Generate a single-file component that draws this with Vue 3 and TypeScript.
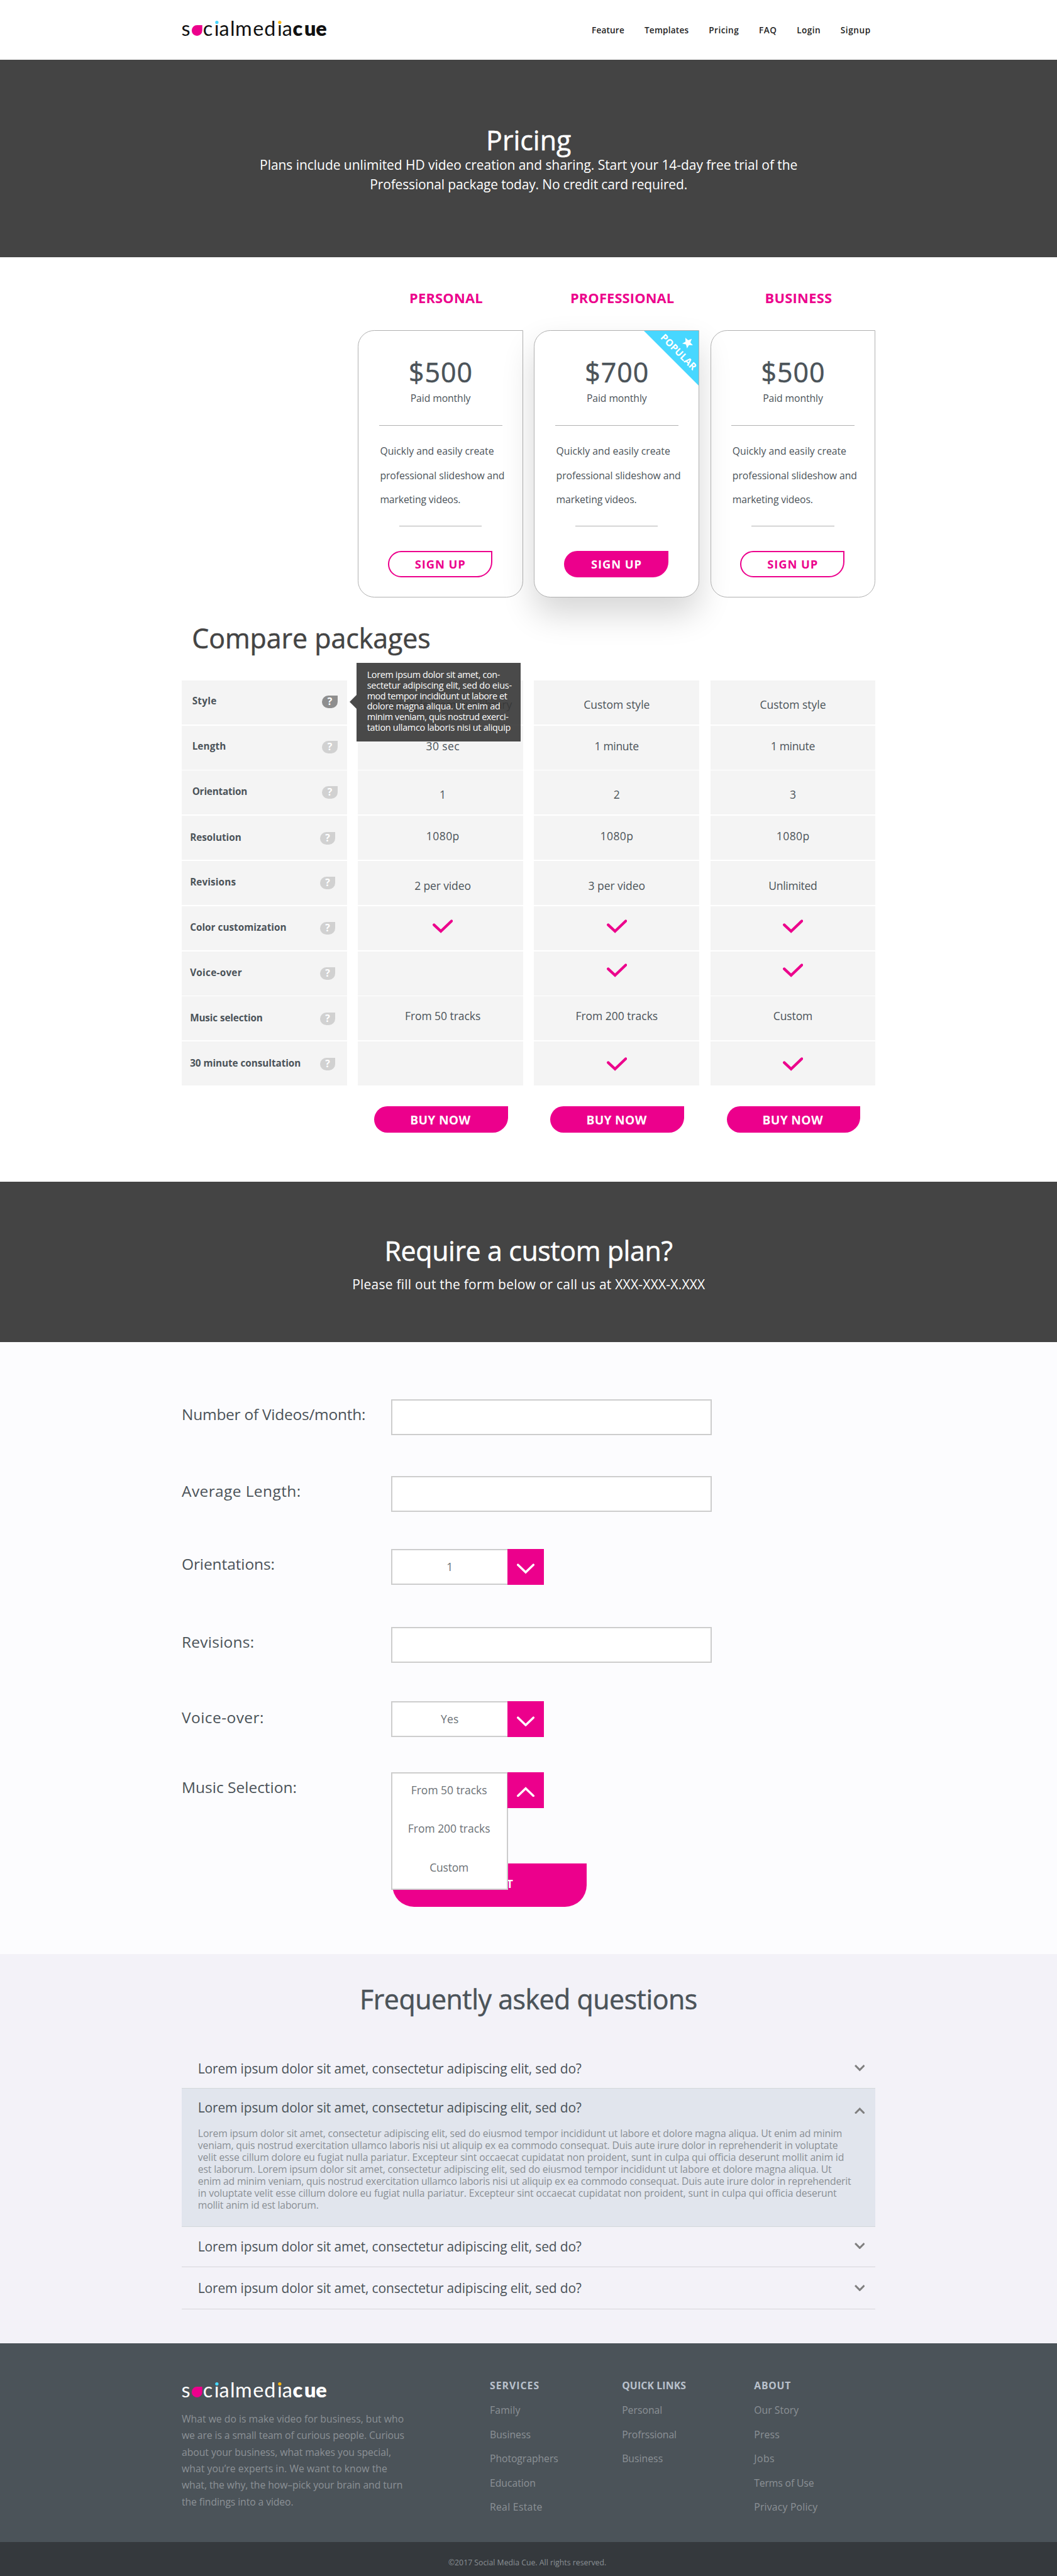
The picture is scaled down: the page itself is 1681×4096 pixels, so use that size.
<script setup lang="ts">
import { ref } from 'vue'
import type { Directive } from 'vue'

type Line = [text: string, width: number]

// Tracks a single line of text so that it spans the given width in layout pixels.
const vFit: Directive<HTMLElement, number> = {
  mounted(el, { value }) {
    const page = el.closest('.page')
    const count = (el.textContent ?? '').trim().length
    if (!page || count < 2) return
    const scale = page.getBoundingClientRect().width / 1920
    const natural = el.getBoundingClientRect().width / scale
    const bearings = parseFloat(getComputedStyle(el).fontSize) * 0.07
    const spacing = (value + bearings - natural) / (count - 1)
    el.style.letterSpacing = `${spacing}px`
    el.style.marginRight = `${-spacing}px`
  },
}

const nav: Line[] = [
  ['Feature', 58], ['Templates', 79], ['Pricing', 53], ['FAQ', 31], ['Login', 41.5], ['Signup', 53],
]

const plans = [
  { name: 'PERSONAL', nameWidth: 131.5, price: '$500', popular: false },
  { name: 'PROFESSIONAL', nameWidth: 187, price: '$700', popular: true },
  { name: 'BUSINESS', nameWidth: 120, price: '$500', popular: false },
]

const planText: Line[] = [
  ['Quickly and easily create', 205.6],
  ['professional slideshow and', 225],
  ['marketing videos.', 145],
]

const tooltip: Line[] = [
  ['Lorem ipsum dolor sit amet, con-', 240.7],
  ['sectetur adipiscing elit, sed do eius-', 262],
  ['mod tempor incididunt ut labore et', 253.7],
  ['dolore magna aliqua. Ut enim ad', 241],
  ['minim veniam, quis nostrud exerci-', 256],
  ['tation ullamco laboris nisi ut aliquip', 260],
]

const check = 'check'
type Cell = Line | 'check' | null
const features: { key: string; label: Line; cells: Cell[] }[] = [
  { key: 'style', label: ['Style', 43], cells: [['Pick a style from our library', 250], ['Custom style', 118.7], ['Custom style', 118.7]] },
  { key: 'length', label: ['Length', 60], cells: [['30 sec', 59.4], ['1 minute', 79], ['1 minute', 79]] },
  { key: 'orientation', label: ['Orientation', 99], cells: [['1', 10], ['2', 11], ['3', 11]] },
  { key: 'resolution', label: ['Resolution', 92], cells: [['1080p', 58.5], ['1080p', 58.5], ['1080p', 58.5]] },
  { key: 'revisions', label: ['Revisions', 82], cells: [['2 per video', 101], ['3 per video', 102], ['Unlimited', 87]] },
  { key: 'color', label: ['Color customization', 174], cells: [check, check, check] },
  { key: 'voice', label: ['Voice-over', 93], cells: [null, check, check] },
  { key: 'music', label: ['Music selection', 131], cells: [['From 50 tracks', 136], ['From 200 tracks', 148], ['Custom', 70]] },
  { key: 'consultation', label: ['30 minute consultation', 200], cells: [null, check, check] },
]

const tracks: Line[] = [['From 50 tracks', 136.7], ['From 200 tracks', 148], ['Custom', 69.4]]

const question = 'Lorem ipsum dolor sit amet, consectetur adipiscing elit, sed do?'
const openItem = ref(1)
const answer: Line[] = [
  ['Lorem ipsum dolor sit amet, consectetur adipiscing elit, sed do eiusmod tempor incididunt ut labore et dolore magna aliqua. Ut enim ad minim', 1168.6],
  ['veniam, quis nostrud exercitation ullamco laboris nisi ut aliquip ex ea commodo consequat. Duis aute irure dolor in reprehenderit in voluptate', 1161],
  ['velit esse cillum dolore eu fugiat nulla pariatur. Excepteur sint occaecat cupidatat non proident, sunt in culpa qui officia deserunt mollit anim id', 1172],
  ['est laborum. Lorem ipsum dolor sit amet, consectetur adipiscing elit, sed do eiusmod tempor incididunt ut labore et dolore magna aliqua. Ut', 1149.6],
  ['enim ad minim veniam, quis nostrud exercitation ullamco laboris nisi ut aliquip ex ea commodo consequat. Duis aute irure dolor in reprehenderit', 1185],
  ['in voluptate velit esse cillum dolore eu fugiat nulla pariatur. Excepteur sint occaecat cupidatat non proident, sunt in culpa qui officia deserunt', 1158.7],
  ['mollit anim id est laborum.', 218],
]

const about: Line[] = [
  ['What we do is make video for business, but who', 402],
  ['we are is a small team of curious people. Curious', 403],
  ['about your business, what makes you special,', 379],
  ['what you’re experts in. We want to know the', 372],
  ['what, the why, the how–pick your brain and turn', 400],
  ['the findings into a video.', 201.5],
]

const columns: { title: Line; links: Line[] }[] = [
  { title: ['SERVICES', 88], links: [['Family', 54], ['Business', 73], ['Photographers', 123], ['Education', 82], ['Real Estate', 94]] },
  { title: ['QUICK LINKS', 115], links: [['Personal', 72], ['Profrssional', 98], ['Business', 73]] },
  { title: ['ABOUT', 65], links: [['Our Story', 79.5], ['Press', 45], ['Jobs', 35.5], ['Terms of Use', 107.5], ['Privacy Policy', 114]] },
]
</script>

<template>
  <div class="page">
    <header class="header">
      <div class="container header-inner">
        <svg class="logo" viewBox="330 24 270 52" width="270" height="52">
          <text class="thin" x="329.5" y="64.7">s</text>
          <path class="drop" d="M367.3 45.7V55.4A9.6 9.7 0 1 1 357.7 45.7Z" />
          <text class="thin" x="368.5 389.2 398 418 427 459.3 480 503.6 512.4" y="64.7">cialmedia</text>
          <text class="heavy" x="531.5 552.6 573.5" y="64.7">cue</text>
          <rect class="mask" x="390" y="35" width="7.6" height="9.4" />
          <rect class="mask" x="504.4" y="35" width="7.2" height="9.4" />
          <circle cx="393.8" cy="40.6" r="3" fill="#47d7ff" />
          <circle cx="508" cy="40.6" r="3" fill="#fdb913" />
        </svg>
        <nav class="nav">
          <a v-for="[text, width] in nav" :key="text" v-fit="width">{{ text }}</a>
        </nav>
      </div>
    </header>

    <section class="hero">
      <h1><span v-fit="151" class="line">Pricing</span></h1>
      <p>
        <span v-fit="975" class="line">Plans include unlimited HD video creation and sharing. Start your 14-day free trial of the</span><br />
        <span v-fit="575" class="line">Professional package today. No credit card required.</span>
      </p>
    </section>

    <section class="pricing">
      <div class="container">
        <div class="plans plan-names">
          <h3 v-for="plan in plans" :key="plan.name"><span v-fit="plan.nameWidth" class="line">{{ plan.name }}</span></h3>
        </div>
        <div class="plans">
          <article v-for="plan in plans" :key="plan.name" class="card" :class="{ popular: plan.popular }">
            <svg v-if="plan.popular" class="ribbon" viewBox="0 0 100 100" width="100" height="100">
              <path d="M0 0H100V100Z" fill="#47d7ff" />
              <g transform="translate(63 38.5) rotate(45)" fill="#fff">
                <text x="-42" y="6" textLength="84" font-size="17.5" font-weight="700">POPULAR</text>
                <path transform="translate(0 -24)" d="M0-10L2.8-3.5 9.7-3 4.4 1.7 6.1 8.5 0 4.8-6.1 8.5-4.4 1.7-9.7-3-2.8-3.5Z" />
              </g>
            </svg>
            <div class="price"><span v-fit="112" class="line">{{ plan.price }}</span></div>
            <div class="period"><span v-fit="108" class="line">Paid monthly</span></div>
            <hr class="rule" />
            <p class="plan-text">
              <template v-for="[text, width] in planText" :key="text"><span v-fit="width" class="line">{{ text }}</span><br /></template>
            </p>
            <hr class="rule short" />
            <button class="signup"><span v-fit="90" class="line">SIGN UP</span></button>
          </article>
        </div>

        <h2 class="compare-title"><span v-fit="430" class="line">Compare packages</span></h2>
        <div class="compare">
          <template v-for="(feature, row) in features" :key="feature.key">
            <div class="cell label" :class="{ indented: row < 3 }">
              <span v-fit="feature.label[1]" class="line">{{ feature.label[0] }}</span>
              <span class="hint" :class="{ active: row === 0 }">?</span>
            </div>
            <div v-for="(cell, col) in feature.cells" :key="col" class="cell value" :class="[feature.key, 'col-' + col]">
              <svg v-if="cell === 'check'" class="check" viewBox="0 0 37 25" width="37" height="25">
                <path d="M2.6 9.8L15 21.5 34.4 2.8" />
              </svg>
              <span v-else-if="cell" v-fit="cell[1]" class="line">{{ cell[0] }}</span>
              <div v-if="row === 0 && col === 0" class="tooltip">
                <template v-for="[text, width] in tooltip" :key="text"><span v-fit="width" class="line">{{ text }}</span><br /></template>
              </div>
            </div>
          </template>
        </div>
        <div class="plans buy-row">
          <button v-for="plan in plans" :key="plan.name" class="buy"><span v-fit="108" class="line">BUY NOW</span></button>
        </div>
      </div>
    </section>

    <section class="custom">
      <h2><span v-fit="520" class="line">Require a custom plan?</span></h2>
      <p><span v-fit="639" class="line">Please fill out the form below or call us at XXX-XXX-X.XXX</span></p>
    </section>

    <section class="request">
      <form class="container form" @submit.prevent>
        <label><span v-fit="332" class="line">Number of Videos/month:</span></label>
        <input type="text" />
        <label><span v-fit="214" class="line">Average Length:</span></label>
        <input type="text" />
        <label><span v-fit="167" class="line">Orientations:</span></label>
        <div class="select">
          <div class="chosen"><span class="line">1</span></div>
          <div class="toggle"><svg viewBox="0 0 32 19" width="32" height="19"><path d="M2 2.5L16 16 30 2.5" /></svg></div>
        </div>
        <label><span v-fit="129.5" class="line">Revisions:</span></label>
        <input type="text" />
        <label class="lower"><span v-fit="147" class="line">Voice-over:</span></label>
        <div class="select">
          <div class="chosen"><span v-fit="31" class="line">Yes</span></div>
          <div class="toggle"><svg viewBox="0 0 32 19" width="32" height="19"><path d="M2 2.5L16 16 30 2.5" /></svg></div>
        </div>
        <label><span v-fit="207" class="line">Music Selection:</span></label>
        <div class="select">
          <div class="chosen"></div>
          <div class="toggle"><svg viewBox="0 0 32 19" width="32" height="19"><path d="M2 16.5L16 3 30 16.5" /></svg></div>
          <div class="options">
            <div v-for="[text, width] in tracks" :key="text"><span v-fit="width" class="line">{{ text }}</span></div>
          </div>
        </div>
        <button class="submit"><span v-fit="84" class="line">SUBMIT</span></button>
      </form>
    </section>

    <section class="faq">
      <h2><span v-fit="610" class="line">Frequently asked questions</span></h2>
      <div class="container">
        <div v-for="n in 4" :key="n" class="faq-item" :class="['item-' + n, { open: openItem === n - 1 }]">
          <div class="question" @click="openItem = n - 1">
            <span v-fit="695" class="line">{{ question }}</span>
            <svg viewBox="0 0 19 12" width="19" height="12">
              <path :d="openItem === n - 1 ? 'M1.2 10.8L9.5 2.4 17.8 10.8' : 'M1.2 1.2L9.5 9.6 17.8 1.2'" />
            </svg>
          </div>
          <p v-if="openItem === n - 1" class="answer">
            <template v-for="[text, width] in answer" :key="text"><span v-fit="width" class="line">{{ text }}</span><br /></template>
          </p>
        </div>
      </div>
    </section>

    <footer>
      <div class="footer-main">
        <div class="container footer-inner">
          <div class="about">
            <svg class="logo light" viewBox="330 24 270 52" width="270" height="52">
              <text class="thin" x="329.5" y="64.7">s</text>
              <path class="drop" d="M367.3 45.7V55.4A9.6 9.7 0 1 1 357.7 45.7Z" />
              <text class="thin" x="368.5 389.2 398 418 427 459.3 480 503.6 512.4" y="64.7">cialmedia</text>
              <text class="heavy" x="531.5 552.6 573.5" y="64.7">cue</text>
              <rect class="mask" x="390" y="35" width="7.6" height="9.4" />
              <rect class="mask" x="504.4" y="35" width="7.2" height="9.4" />
              <circle cx="393.8" cy="40.6" r="3" fill="#47d7ff" />
              <circle cx="508" cy="40.6" r="3" fill="#fdb913" />
            </svg>
            <p>
              <template v-for="[text, width] in about" :key="text"><span v-fit="width" class="line">{{ text }}</span><br /></template>
            </p>
          </div>
          <div v-for="column in columns" :key="column.title[0]" class="column">
            <h4><span v-fit="column.title[1]" class="line">{{ column.title[0] }}</span></h4>
            <ul>
              <li v-for="[text, width] in column.links" :key="text"><span v-fit="width" class="line">{{ text }}</span></li>
            </ul>
          </div>
        </div>
      </div>
      <div class="footer-bar"><span v-fit="286" class="line">©2017 Social Media Cue. All rights reserved.</span></div>
    </footer>
  </div>
</template>

<style>
html,
body {
  margin: 0;
  background: #fff;
}
body {
  overflow-x: hidden;
}
</style>

<style scoped>
.page {
  width: 1920px;
  zoom: 0.87575;
  overflow: hidden;
  font-family: "Open Sans", "Noto Sans", sans-serif;
  color: #4b5359;
  background: #fff;
}
h1, h2, h3, h4, p, ul { margin: 0; padding: 0; font-weight: 400; }
h1, h2, .price { -webkit-text-stroke: 0.6px currentColor; }
ul { list-style: none; }
button, input { font-family: inherit; border: 0; padding: 0; margin: 0; box-sizing: border-box; display: block; }
.container { width: 1260px; margin: 0 auto; }
.line { display: inline-block; white-space: nowrap; vertical-align: top; transform: translateY(0.05em); }
h1 .line, h2 .line, .price .line { transform: translateY(0.025em); }

.header { height: 109px; }
.header-inner { display: flex; justify-content: space-between; align-items: flex-start; }
.header .logo { margin-top: 24px; }
.logo { display: block; font-family: Lato, sans-serif; font-size: 37px; fill: #111; }
.logo .heavy { font-weight: 800; }
.logo .drop { fill: #ec008c; }
.logo .mask { fill: #fff; }
.logo.light { fill: #fff; }
.logo.light .mask { fill: #4b5359; }
.nav { display: flex; gap: 36.8px; margin: 45px 9.5px 0 0; font-size: 15.5px; font-weight: 600; line-height: 20px; color: #222; }
.nav a { white-space: nowrap; }

.hero { height: 357.7px; padding-top: 115.4px; box-sizing: border-box; background: #444; color: #fff; text-align: center; }
.hero h1 { font-size: 49px; line-height: 56px; }
.hero p { font-size: 24px; line-height: 36px; }

.pricing { height: 1679.3px; box-sizing: border-box; padding-top: 59px; }
.plans { display: grid; grid-template-columns: repeat(3, 300px); gap: 20px; margin-left: 320px; }
.plan-names { margin-bottom: 43.6px; }
.plan-names h3 { padding-left: 20px; text-align: center; font-size: 25px; line-height: 30px; font-weight: 700; color: #ec008c; }
.card { position: relative; height: 486px; box-sizing: border-box; border: 1px solid #b0b0b0; border-radius: 30px 0 30px 30px; padding-top: 44.7px; }
.card.popular { background: #fff; box-shadow: 0 30px 60px rgba(0, 0, 0, 0.16); }
.ribbon { position: absolute; top: 0; right: 0; }
.price { text-align: center; font-size: 49px; line-height: 60px; }
.period { text-align: center; margin-top: 5.4px; font-size: 18px; line-height: 24px; }
.rule { border: 0; height: 1.4px; width: 224px; margin: 37.4px auto 0; background: #b2b2b2; }
.plan-text { margin: 23px 0 0 39px; font-size: 18px; line-height: 44px; }
.rule.short { width: 150px; margin-top: 26.4px; }
.signup { width: 190px; height: 48px; margin: 43.7px 0 0 53px; border: 2.3px solid #ec008c; border-radius: 24px 0 28px 24px; background: none; color: #ec008c; text-align: center; font-size: 21px; line-height: 42px; font-weight: 700; }
.popular .signup { background: #ec008c; color: #fff; }

.compare-title { margin: 43px 0 47px 18.5px; font-size: 49px; line-height: 60px; color: #444; }
.compare { display: grid; grid-template-columns: repeat(4, 300px); grid-auto-rows: 80px; gap: 2px 20px; }
.cell { position: relative; box-sizing: border-box; background: #f4f4f4; }
.label { display: flex; justify-content: space-between; padding: 28px 21px 0 15px; font-size: 17.5px; line-height: 20px; font-weight: 700; }
.label.indented { padding: 27px 17px 0 19px; }
.hint { width: 28px; height: 23px; margin-top: 1px; border-radius: 14px 0 14px 14px; background: #d1d1d1; color: #fff; text-align: center; font-size: 18px; line-height: 22.5px; }
.hint.active { background: #8e8e8e; }
.value { text-align: center; font-size: 20px; line-height: 24px; padding-top: 24px; }
.value.col-0 { padding-left: 8px; }
.value.style { padding-top: 31.5px; }
.value.orientation { padding-top: 30.5px; }
.value.revisions { padding-top: 32px; }
.value.resolution { padding-top: 23.5px; }
.value.music { padding-top: 22px; }
.value.voice { padding-top: 22px; }
.value.consultation { padding-top: 28px; }
.check { display: block; margin: 0 auto; fill: none; stroke: #ec008c; stroke-width: 5; stroke-linecap: round; }
.tooltip { position: absolute; z-index: 2; left: -2px; top: -32px; width: 297px; height: 143px; box-sizing: border-box; padding: 12px 0 0 18.5px; background: rgba(54, 54, 54, 0.9); color: #fff; text-align: left; font-size: 16.5px; line-height: 19.1px; }
.tooltip::before { content: ""; position: absolute; left: -13.5px; top: 59px; border: solid transparent; border-width: 13.7px 13.5px 13.7px 0; border-right-color: rgba(54, 54, 54, 0.9); }
.buy-row { margin-top: 37px; }
.buy { width: 243px; height: 48px; margin-left: 29.5px; padding-right: 3px; border-radius: 24px 0 28px 24px; background: #ec008c; color: #fff; font-size: 22px; line-height: 45px; font-weight: 700; text-align: center; }

.custom { height: 291px; box-sizing: border-box; padding-top: 94px; background: #444; color: #fff; text-align: center; }
.custom h2 { font-size: 49px; line-height: 60px; }
.custom p { margin-top: 15.6px; font-size: 24px; line-height: 30px; }

.request { height: 1111px; box-sizing: border-box; padding-top: 104px; background: #fcfcfe; }
.form { display: grid; grid-template-columns: 380px 1fr; grid-template-rows: 139px 132.5px 141.5px 135.3px 128.2px 166.5px 78px; }
.form label { padding-top: 8px; font-size: 28px; line-height: 36px; }
.form label.lower { padding-top: 9.5px; }
.form input { width: 583px; height: 65px; border: 2.3px solid #cdcdcd; background: #fff; }
.select { position: relative; display: flex; width: 278px; height: 65px; font-size: 20px; line-height: 24px; text-align: center; color: #6b7176; }
.chosen { width: 211px; box-sizing: border-box; padding-top: 17px; border: 2.3px solid #cdcdcd; border-right: 0; background: #fff; }
.toggle { position: relative; z-index: 3; width: 67px; display: flex; justify-content: center; padding: 26.5px 4px 0 0; box-sizing: border-box; background: #ec008c; margin-right: -1px; }
.toggle svg { fill: none; stroke: #fff; stroke-width: 4; stroke-linecap: round; margin-left: 5px; }
.options { position: absolute; z-index: 2; top: 0.8px; left: 0; width: 213px; height: 213.5px; box-sizing: border-box; padding: 16.8px 2px 0 0; border: 2.3px solid #cdcdcd; background: #fff; display: flex; flex-direction: column; gap: 46px; }
.submit { display: flex; justify-content: center; grid-column: 2; width: 352px; height: 78px; margin-left: 3px; border-radius: 40px 0 40px 40px; background: #ec008c; color: #fff; font-size: 20px; line-height: 72px; font-weight: 700; }

.faq { height: 707px; box-sizing: border-box; padding-top: 51.8px; background: #f3f2f8; }
.faq h2 { text-align: center; font-size: 49px; line-height: 60px; margin-bottom: 60px; }
.faq-item { box-sizing: border-box; border-bottom: 1.4px solid #d6d6da; }
.item-1 { height: 71.3px; padding-top: 19.9px; border-bottom: 0; }
.item-2 { height: 252.4px; padding-top: 18.7px; }
.item-3 { height: 73.6px; padding-top: 19.1px; }
.item-4 { height: 75.7px; padding-top: 21.7px; }
.faq-item.open { background: #e1e5ed; border-top: 1.2px solid #d3d8db; border-bottom: 1.2px solid #d3d8db; }
.question { display: flex; justify-content: space-between; padding: 0 19.5px 0 29.5px; font-size: 24px; line-height: 30px; }
.question svg { margin-top: 9.4px; fill: none; stroke: #7f7f7f; stroke-width: 3.4; }
.open .question svg { margin-top: 15.4px; }
.answer { margin: 21.4px 0 0 29.5px; font-size: 18px; line-height: 21.65px; color: #8a8f94; }

.footer-main { height: 360px; background: #4b5359; }
.footer-inner { display: flex; }
.about { flex: none; width: 559.5px; padding-top: 57px; }
.about p { margin-top: 12px; font-size: 18px; line-height: 30px; color: #8b9196; }
.column { flex: none; width: 240px; padding-top: 64px; font-size: 18px; color: #8b9196; white-space: nowrap; }
.column:last-child { width: 140px; }
.column h4 { margin-bottom: 10px; line-height: 24px; font-weight: 700; color: #b9c1cc; }
.column li { line-height: 44px; }
.footer-bar { height: 62px; box-sizing: border-box; padding: 28px 5px 0 0; background: #35393d; text-align: center; font-size: 14px; line-height: 18px; color: #8b9196; }
</style>
